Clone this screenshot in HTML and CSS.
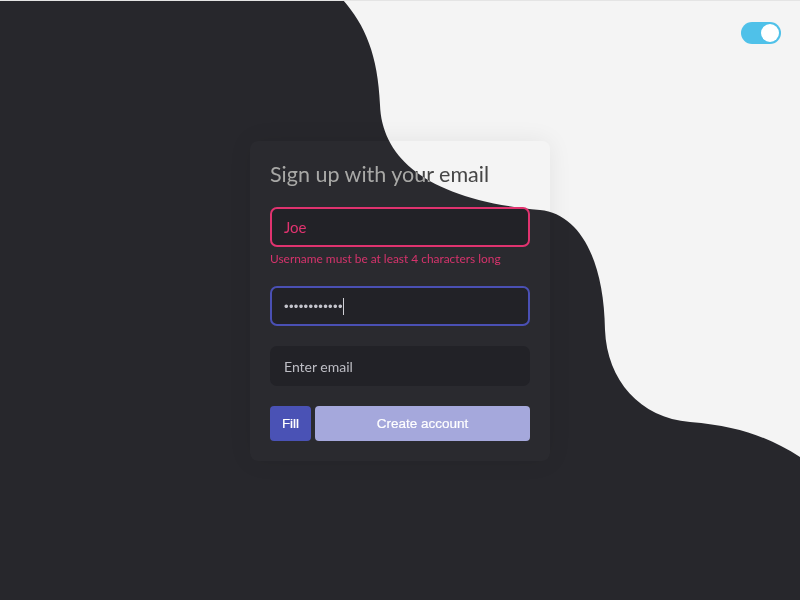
FILE: index.html
```html
<!DOCTYPE html>
<html lang="en">
<head>
<meta charset="utf-8">
<title>Sign up</title>
<link rel="stylesheet" href="styles.css">
</head>
<body>
<svg class="wave" width="800" height="600" viewBox="0 0 800 600" aria-hidden="true">
  <path class="wave-light" d="M343,0 C365,25 378,55 380,105 C382,160 430,200 540,210 C580,214 604,260 605,330 C607,380 640,418 690,422 C740,426 770,438 800,457 L800,0 Z"/>
  <rect class="wave-top" x="0" y="0" width="800" height="1"/>
</svg>
<div class="toggle"><span class="knob"></span></div>
<main class="page">
  <form class="card">
    <h1 class="title">Sign up with your email</h1>
    <div class="field">
      <div class="input input-error">Joe</div>
      <div class="error-msg">Username must be at least 4 characters long</div>
    </div>
    <div class="field">
      <div class="input input-focus"><span class="dots">••••••••••••</span><span class="caret"></span></div>
    </div>
    <div class="field">
      <div class="input input-plain placeholder">Enter email</div>
    </div>
    <div class="actions">
      <button type="button" class="btn btn-fill">Fill</button>
      <button type="button" class="btn btn-create">Create account</button>
    </div>
  </form>
</main>
</body>
</html>
```
FILE: styles.css
```css
html, body {
  margin: 0;
  padding: 0;
}
body {
  width: 800px;
  height: 600px;
  background: #27272c;
  overflow: hidden;
  font-family: "Lato", "Liberation Sans", sans-serif;
}
.wave {
  position: absolute;
  left: 0;
  top: 0;
  display: block;
}
.wave-light { fill: #f4f4f4; }
.wave-top { fill: #e4e4e4; }

.toggle {
  position: absolute;
  top: 22px;
  left: 741px;
  width: 40px;
  height: 22px;
  border-radius: 11px;
  background: #4fc1e9;
}
.knob {
  position: absolute;
  top: 2px;
  right: 2px;
  width: 18px;
  height: 18px;
  border-radius: 50%;
  background: #ffffff;
}

.page {
  height: 600px;
  padding-top: 1px;
  display: flex;
  align-items: center;
  justify-content: center;
}
.card {
  position: relative;
  width: 260px;
  padding: 21px 20px 20px;
  border-radius: 8px;
  background: rgba(255, 255, 255, 0.015);
  box-shadow: 0 0 24px rgba(0, 0, 0, 0.07);
  display: flex;
  flex-direction: column;
}
.title {
  margin: 0 0 20px;
  font-size: 21.5px;
  line-height: 25px;
  font-weight: 400;
  color: #bebebe;
  mix-blend-mode: exclusion;
}
.field {
  margin-bottom: 20px;
}
.input {
  box-sizing: border-box;
  height: 40px;
  border-radius: 7px;
  background: #222227;
  display: flex;
  align-items: center;
  padding: 0 12px;
  font-size: 14px;
}
.input-error {
  border: 2px solid #e0336f;
  color: #e0336f;
  font-size: 15px;
}
.input-focus {
  border: 2px solid #4a50b4;
  color: #c4c4cc;
}
.input-plain {
  padding: 0 14px;
}
.placeholder {
  color: #bdbdc4;
}
.dots {
  font-family: "Liberation Sans", sans-serif;
  font-size: 13px;
  letter-spacing: 0.35px;
  color: #c4c4cc;
}
.caret {
  width: 1px;
  height: 17px;
  background: #d0d0d6;
}
.error-msg {
  margin-top: 5px;
  font-size: 11.9px;
  line-height: 14px;
  color: #d6336c;
}
.actions {
  display: flex;
  gap: 4px;
}
.btn {
  height: 35px;
  border: 0;
  border-radius: 4px;
  color: #ffffff;
  font-family: "Liberation Sans", sans-serif;
  font-size: 13.5px;
  font-weight: 400;
  padding: 0;
  -webkit-text-stroke: 0.2px #ffffff;
}
.btn-fill {
  width: 41px;
  background: #4a52b5;
}
.btn-create {
  flex: 1;
  background: #a5a8dc;
}
```
